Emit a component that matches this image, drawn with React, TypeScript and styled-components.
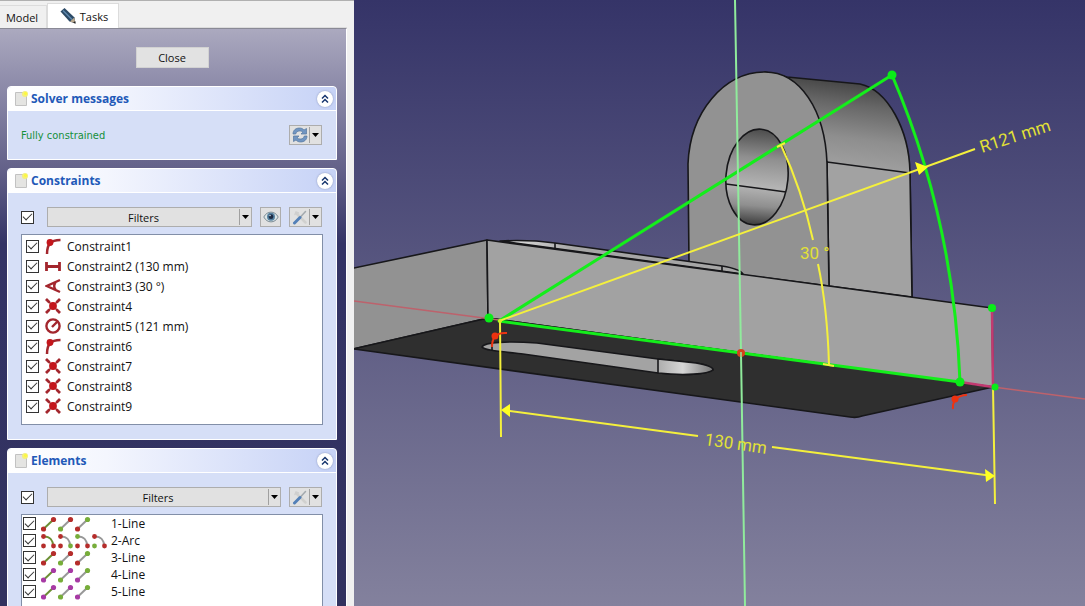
import React from 'react';
import styled, { createGlobalStyle } from 'styled-components';

const GlobalStyle = createGlobalStyle`
  *, *::before, *::after { box-sizing: border-box; }
  body {
    margin: 0;
    overflow: hidden;
    color: #111;
    font-family: 'Open Sans', 'Noto Sans', sans-serif;
    font-size: 11px;
  }
`;

const Shell = styled.main`
  display: grid;
  grid-template-columns: 354px minmax(0, 1fr);
  height: 100vh;
`;

const Sidebar = styled.aside`
  display: flex;
  flex-direction: column;
  min-height: 0;
  overflow: hidden;
  padding-right: 7px;
  border-top: 1px solid #b0b0b0;
  background: #f0f0f0;
`;

const Tabs = styled.div`
  display: flex;
  align-items: flex-end;
  height: 27px;
  flex: none;
  border-bottom: 1px solid #dcdcdc;
`;

const Tab = styled.button<{ $active?: boolean }>`
  display: flex;
  align-items: center;
  justify-content: center;
  gap: 4px;
  width: ${(p) => (p.$active ? 72 : 47)}px;
  height: ${(p) => (p.$active ? 25 : 23)}px;
  margin-bottom: -1px;
  padding: ${(p) => (p.$active ? '0 2px 0 4px' : '0 6px 0 4px')};
  border: 1px solid #dcdcdc;
  border-bottom: 0;
  border-left-width: ${(p) => (p.$active ? 1 : 0)}px;
  background: ${(p) => (p.$active ? '#fff' : '#f0f0f0')};
  color: inherit;
  font-family: inherit;
  font-size: 11px;
`;

const TaskArea = styled.div`
  display: flex;
  flex-direction: column;
  flex: 1;
  min-height: 0;
  gap: 8px;
  padding: 18px 9px 0 7px;
  overflow: hidden;
  border-top: 1px solid #8a8a96;
  border-right: 1px solid #fff;
  background: linear-gradient(#aba9bf 0, #8b89a8 60px, #636189 140px, #333365 215px, #32325f 100%);
`;

const CloseButton = styled.button`
  align-self: center;
  flex: none;
  width: 73px;
  height: 21px;
  margin-bottom: 10px;
  padding: 0;
  border: 1px solid #d2d2d2;
  background: #e2e2e2;
  color: inherit;
  font-family: inherit;
  font-size: 11px;
`;

const PanelBox = styled.section`
  flex: none;
  border: 1px solid #fff;
  border-radius: 4px 4px 0 0;
  background: #d6dff7;
`;

const PanelHeader = styled.header`
  display: flex;
  align-items: center;
  gap: 3px;
  height: 24px;
  padding: 0 3px 0 6px;
  border-bottom: 1px solid #fff;
  border-radius: 4px 4px 0 0;
  background: linear-gradient(90deg, #fff 0%, #f4f6fe 30%, #c6d2f6 100%);
`;

const PanelTitle = styled.h2`
  flex: 1;
  margin: 0;
  color: #2259b8;
  font-size: 12px;
  font-weight: bold;
`;

const CollapseButton = styled.button`
  display: flex;
  width: 16px;
  height: 16px;
  padding: 0;
  border: 0;
  border-radius: 8px;
  background: #fff;
  box-shadow: 0 0 2px #8290b8;
`;

const PanelBody = styled.div`
  padding: 14px 13px;
`;

const Toolbar = styled.div`
  display: flex;
  align-items: center;
  gap: 8px;
  height: 20px;
  padding-right: 1px;
`;

const Status = styled.p`
  flex: 1;
  margin: 0;
  color: #15903a;
  font-family: 'DejaVu Sans Condensed', 'Noto Sans', sans-serif;
`;

const CheckBox = styled.input`
  appearance: none;
  display: grid;
  place-items: center;
  flex: none;
  width: 13px;
  height: 13px;
  margin: 0;
  border: 1px solid #333;
  background: #fff;
  &:checked::after {
    content: '';
    width: 9px;
    height: 5px;
    margin-bottom: 3px;
    border: solid #333;
    border-width: 0 0 1px 1px;
    transform: rotate(-45deg);
  }
`;

const ToggleAll = styled(CheckBox)`
  margin-right: 5px;
`;

const SplitControl = styled.div<{ $wide?: boolean }>`
  display: flex;
  flex: ${(p) => (p.$wide ? 1 : 'none')};
  width: ${(p) => (p.$wide ? 'auto' : '33px')};
  height: 20px;
  border: 1px solid #adadad;
  background: #e1e1e1;
`;

const SplitMain = styled.button`
  display: flex;
  flex: 1;
  align-items: center;
  justify-content: center;
  padding: 0;
  border: 0;
  background: none;
  color: inherit;
  font-family: inherit;
  font-size: 11px;
`;

const SplitArrow = styled.button`
  display: flex;
  align-items: center;
  justify-content: center;
  width: 12px;
  margin: 1px 0;
  padding: 0;
  border: 0;
  border-left: 1px solid #a0a0a0;
  background: none;
`;

const IconButton = styled.button`
  display: flex;
  align-items: center;
  justify-content: center;
  width: 21px;
  height: 20px;
  padding: 0;
  border: 1px solid #adadad;
  background: #e1e1e1;
`;

const List = styled.ul<{ $size: 'fixed' | 'tall' }>`
  height: ${(p) => (p.$size === 'tall' ? 240 : 191)}px;
  margin: 7px 0 0;
  padding: ${(p) => (p.$size === 'tall' ? '0 1px' : '1px 4px')};
  border: 1px solid #828fa8;
  background: #fff;
  list-style: none;
`;

const Row = styled.label<{ $compact?: boolean }>`
  display: flex;
  align-items: center;
  gap: ${(p) => (p.$compact ? 5 : 6)}px;
  height: ${(p) => (p.$compact ? 17 : 20)}px;
  font-size: 12px;
  white-space: nowrap;
`;

const IconStrip = styled.span`
  display: flex;
  gap: 1px;
  width: 65px;
  svg { flex: none; }
`;

const Viewport = styled.section`
  min-width: 0;
  min-height: 0;
  overflow: hidden;
  background: linear-gradient(#353468, #83819d);
`;

const Scene = styled.svg`
  display: block;
  width: 100%;
  height: 100%;
  text {
    font-family: 'Roboto', sans-serif;
    font-size: 17px;
    fill: #e2e136;
  }
`;

const PencilIcon = () => (
  <svg width="16" height="16" viewBox="0 0 16 16">
    <path d="M.5 3.500 4.500 0 14.500 9.500 15.500 15.500 9.500 13.500Z" fill="#2c4a66" />
    <path d="m3 2.500 9 9" stroke="#5f88ad" strokeWidth="1.500" />
    <path d="m10 13.500 4.300-4 1.200 6Z" fill="#b9a88d" />
    <path d="m13 14.700 2.200-1.700.3 2.500Z" fill="#222" />
  </svg>
);

const NoteIcon = () => (
  <svg width="14" height="16" viewBox="0 0 14 16">
    <path d="M1.500 1.500h11v13h-11z" fill="#e4e4e2" stroke="#c2c2c2" />
    <circle cx="11" cy="3" r="3" fill="#f5f07a" />
    <circle cx="11.500" cy="2.500" r="1.500" fill="#fdf93c" />
  </svg>
);

const ChevronsIcon = () => (
  <svg width="16" height="16" viewBox="0 0 16 16" fill="none" stroke="#17356f" strokeWidth="1.500">
    <path d="m5 7.500 3-3 3 3M5 11.500l3-3 3 3" />
  </svg>
);

const ArrowDown = () => (
  <svg width="7" height="4" viewBox="0 0 7 4">
    <path d="M0 0h7L3.500 4Z" fill="#000" />
  </svg>
);

const RefreshIcon = () => (
  <svg width="16" height="16" viewBox="0 0 16 16">
    <path d="M1 7C1 3 4 1 7.500 1c2 0 3.500.8 4.500 2l2.500-1.500V7H9l1.800-1.800C10 4.300 9 4 7.700 4 5.500 4 4.300 5 3.700 7Z" fill="#7095c2" stroke="#54779f" strokeWidth=".7" />
    <path d="M15 9c0 4-3 6-6.500 6-2 0-3.500-.8-4.500-2l-2.500 1.500V9H7l-1.800 1.800c.8.900 1.800 1.200 3.100 1.200 2.200 0 3.400-1 4-3Z" fill="#7095c2" stroke="#54779f" strokeWidth=".7" />
  </svg>
);

const EyeIcon = () => (
  <svg width="16" height="14" viewBox="0 0 16 14">
    <path d="M.8 7C4 .500 12 .500 15.200 7 12 13.500 4 13.500 .8 7Z" fill="#dde5e6" stroke="#7c8d96" />
    <circle cx="8" cy="6.700" r="4" fill="#5581a0" />
    <circle cx="8" cy="6.700" r="2.400" fill="#1d2c45" />
    <circle cx="7" cy="5.500" r=".8" fill="#c9dceb" />
  </svg>
);

const ToolsIcon = () => (
  <svg width="16" height="16" viewBox="0 0 16 16" fill="none" strokeLinecap="round">
    <path d="m5 5 8.500 8.500" stroke="#d0d0ce" strokeWidth="2.500" />
    <path d="M3 5.500 4 3l2.500 1" stroke="#cfcfcf" strokeWidth="1.500" />
    <path d="m7.500 9 6-6.500" stroke="#a3a9ae" strokeWidth="1.500" />
    <path d="m2.500 14 5.500-5.500" stroke="#5380b8" strokeWidth="3" />
  </svg>
);

type ConstraintKind = 'tangent' | 'distance' | 'angle' | 'coincident' | 'radius';

const ConstraintIcon = ({ kind }: { kind: ConstraintKind }) => (
  <svg width="16" height="16" viewBox="0 0 16 16" fill="none" stroke="#a3262d" strokeWidth="2">
    {kind === 'tangent' && (
      <>
        <path d="M2 16C2 7 5 2 15.500 2" strokeWidth="2.500" />
        <circle cx="5" cy="4.500" r="3.400" fill="#c4161c" stroke="none" />
      </>
    )}
    {kind === 'distance' && <path d="M1.500 4v9M14.500 4v9M2 8.500h12" strokeWidth="2.800" />}
    {kind === 'angle' && <path d="M15 2 2 8 15 14M10.500 4.500c-1.500 2-1.500 5 0 7" strokeWidth="2.400" />}
    {kind === 'coincident' && (
      <>
        <path d="m1 1 14 14M15 1 1 15" strokeWidth="2.800" />
        <circle cx="8" cy="8" r="5.200" fill="#fff" stroke="none" />
        <circle cx="8" cy="8" r="3.900" fill="#c4161c" stroke="none" />
        <path d="m5.500 5.500-2-2M10.500 5.500l2-2M5.500 10.500l-2 2M10.500 10.500l2 2" strokeWidth="1.500" />
      </>
    )}
    {kind === 'radius' && (
      <>
        <circle cx="8" cy="8" r="6.600" strokeWidth="2.400" />
        <path d="m7 9 5-5" strokeWidth="2.400" />
      </>
    )}
  </svg>
);

const R = '#b52d2b';
const G = '#77ad3a';
const P = '#a73aa4';
const GREY = '#989898';

type Glyph = { line: string; dots: string[] };

const ElementIcon = ({ line, dots }: Glyph) => (
  <svg width="16" height="16" viewBox="0 0 16 16" fill="none">
    {dots.length === 2 ? (
      <>
        <path d="M2.500 13 12.500 3.500" stroke={line} strokeWidth="2" />
        <circle cx="2.500" cy="13" r="2.600" fill={dots[0]} />
        <circle cx="12.500" cy="3.500" r="2.600" fill={dots[1]} />
      </>
    ) : (
      <>
        <path d="M3 3.500c6 0 9 4 9 9" stroke={line} strokeWidth="2" />
        <circle cx="2.500" cy="3.500" r="2.400" fill={dots[0]} />
        <circle cx="2.500" cy="13" r="2.400" fill={dots[1]} />
        <circle cx="12.500" cy="13" r="2.400" fill={dots[2]} />
      </>
    )}
  </svg>
);

const constraints: { label: string; kind: ConstraintKind }[] = [
  { label: 'Constraint1', kind: 'tangent' },
  { label: 'Constraint2 (130 mm)', kind: 'distance' },
  { label: 'Constraint3 (30 °)', kind: 'angle' },
  { label: 'Constraint4', kind: 'coincident' },
  { label: 'Constraint5 (121 mm)', kind: 'radius' },
  { label: 'Constraint6', kind: 'tangent' },
  { label: 'Constraint7', kind: 'coincident' },
  { label: 'Constraint8', kind: 'coincident' },
  { label: 'Constraint9', kind: 'coincident' },
];

const lineGlyphs = (c: string): Glyph[] => [
  { line: '#6c8f34', dots: [c, c] },
  { line: GREY, dots: [G, c] },
  { line: GREY, dots: [c, G] },
];

const arcGlyphs: Glyph[] = [
  { line: '#6c8f34', dots: [R, R, R] },
  { line: GREY, dots: [R, R, G] },
  { line: GREY, dots: [G, R, R] },
  { line: GREY, dots: [R, G, R] },
];

const elements: { label: string; glyphs: Glyph[] }[] = [
  { label: '1-Line', glyphs: lineGlyphs(R) },
  { label: '2-Arc', glyphs: arcGlyphs },
  { label: '3-Line', glyphs: lineGlyphs(R) },
  { label: '4-Line', glyphs: lineGlyphs(P) },
  { label: '5-Line', glyphs: lineGlyphs(P) },
];

const Panel = ({ title, children }: { title: string; children: React.ReactNode }) => (
  <PanelBox>
    <PanelHeader>
      <NoteIcon />
      <PanelTitle>{title}</PanelTitle>
      <CollapseButton aria-label={`Collapse ${title}`}>
        <ChevronsIcon />
      </CollapseButton>
    </PanelHeader>
    <PanelBody>{children}</PanelBody>
  </PanelBox>
);

const SplitButton = ({ wide, name, children }: { wide?: boolean; name: string; children: React.ReactNode }) => (
  <SplitControl $wide={wide}>
    <SplitMain aria-label={name}>{children}</SplitMain>
    <SplitArrow aria-label={`${name} menu`}>
      <ArrowDown />
    </SplitArrow>
  </SplitControl>
);

const ModelScene = () => (
  <Scene viewBox="354 0 731 606" preserveAspectRatio="xMinYMin slice" role="img" aria-label="Sketch on model">
    <defs>
      <linearGradient id="hole" x1="0" y1="0" x2="0" y2="1">
        <stop offset="0" stopColor="#4c4c4c" />
        <stop offset=".3" stopColor="#8f8f8f" />
        <stop offset=".6" stopColor="#b4b4b4" />
        <stop offset=".8" stopColor="#8f8f8f" />
        <stop offset="1" stopColor="#3c3c3c" />
      </linearGradient>
      <linearGradient id="barrel" gradientUnits="userSpaceOnUse" x1="850" y1="76" x2="838" y2="170">
        <stop offset="0" stopColor="#3d3d3d" />
        <stop offset=".3" stopColor="#676767" />
        <stop offset=".65" stopColor="#8e8e8e" />
        <stop offset="1" stopColor="#a2a2a2" />
      </linearGradient>
      <linearGradient id="slotEnd">
        <stop offset="0" stopColor="#adadad" />
        <stop offset=".45" stopColor="#d6d6d6" />
        <stop offset="1" stopColor="#777" />
      </linearGradient>
      <linearGradient id="slotTop">
        <stop offset="0" stopColor="#e8e8e8" />
        <stop offset=".3" stopColor="#a6a6a6" />
      </linearGradient>
    </defs>

    <g stroke="#17171a" strokeWidth="1.600" strokeLinejoin="round">
      <path d="M765 72 L787 77 860 84C888 90 909 130 910 172L912 297 829 286 827 162Z" fill="url(#barrel)" />
      <path d="M827 162 910 173 912 297 829 286Z" fill="#a2a2a2" />
      <path d="M689 262 688 164C690 112 724 72 765 72 800 72 825 110 827 163L829 286 743 275Z" fill="#929292" />
      <ellipse cx="757" cy="177" rx="31" ry="48" transform="rotate(5 757 177)" fill="url(#hole)" />
      <path d="M726 184 786 192" />
      <path d="M500 241C520 240 540 241 555 243L722 266C734 268 741 270 743 274Z" fill="url(#slotTop)" />
      <path d="M555 243v6M722 266v6" />
      <path d="M340 271 487 240 488 318 340 352Z" fill="#929292" />
      <path d="M487 240 992 308 993 387 488 318Z" fill="#a2a2a2" />
      <path d="M340 352 488 318 993 387 862 416Q857 418 850 417L354 349Z" fill="#2f2f2f" />
      <path d="M482 347C484 342 508 341 537 343L658 359 696 363C708 365 713 367 713 370 708 374 685 376 658 373L523 354C495 351 484 350 482 347Z" fill="#a3a3a3" />
      <path d="M658 359 696 363C708 365 713 367 713 370 708 374 685 376 658 373Z" fill="url(#slotEnd)" />
      <path d="M492 343v7" />
    </g>

    <g fill="none">
      <path d="M354 301 499 320M993 387 1085 399" stroke="#bd626c" strokeWidth="1.500" />
      <path d="M992 309 993 387 960 382" stroke="#c13a70" strokeWidth="2.500" />
      <path d="M892 75 499 321 960 382Q954 220 892 75" stroke="#14ee1b" strokeWidth="3" strokeLinejoin="round" />
      <path d="M735 0 741 353 745 606" stroke="#90eb9c" strokeWidth="2" />
      <path d="M499 321 975 149" stroke="#f4f03c" strokeWidth="2" />
      <path d="M777 147 785 143M781 145C794 173 806 208 813 240M818 264C824 292 828 330 829 365M823 364 834 366" stroke="#f4f03c" strokeWidth="2" />
      <path d="M500 321 501 437M993 387 995 504M503 410 698 436M772 447 993 476" stroke="#f4f03c" strokeWidth="2" />
    </g>

    <g fill="#ffff22">
      <path d="M501 410 510 404V417Z" />
      <path d="M995 476 985 469 986 482Z" />
      <path d="M928 167 915 162 919 175Z" />
    </g>

    <g fill="#09ed18">
      <circle cx="892" cy="75" r="4.500" />
      <circle cx="489" cy="318" r="4.500" />
      <circle cx="960" cy="382" r="4.500" />
      <circle cx="992" cy="308" r="4" />
      <circle cx="995" cy="387" r="3.500" />
    </g>
    <circle cx="500" cy="321" r="2" fill="#d8ee24" />
    <circle cx="741" cy="353" r="4" fill="#d6421c" />
    <path d="M741 352 741 358" stroke="#90eb9c" strokeWidth="1.500" />
    <g fill="none" stroke="#ec3413" strokeWidth="2">
      <path d="M492 347C492 339 495 332 507 333" />
      <path d="M953 409C952 402 957 395 967 395" />
    </g>
    <g fill="#ee3210">
      <circle cx="495" cy="336" r="3.500" />
      <circle cx="955" cy="399" r="3.500" />
    </g>
    <text transform="translate(982 153) rotate(-18)">R121 mm</text>
    <text x="800" y="259">30 °</text>
    <text transform="translate(704 445) rotate(8)">130 mm</text>
  </Scene>
);

export default function App() {
  return (
    <>
      <GlobalStyle />
      <Shell>
        <Sidebar>
          <Tabs role="tablist">
            <Tab role="tab" aria-selected={false}>Model</Tab>
            <Tab role="tab" aria-selected $active>
              <PencilIcon />
              Tasks
            </Tab>
          </Tabs>
          <TaskArea>
            <CloseButton>Close</CloseButton>
            <Panel title="Solver messages">
              <Toolbar>
                <Status>Fully constrained</Status>
                <SplitButton name="Update">
                  <RefreshIcon />
                </SplitButton>
              </Toolbar>
            </Panel>
            <Panel title="Constraints">
              <Toolbar>
                <ToggleAll type="checkbox" defaultChecked aria-label="Toggle all constraints" />
                <SplitButton wide name="Filters">Filters</SplitButton>
                <IconButton aria-label="Show constraints">
                  <EyeIcon />
                </IconButton>
                <SplitButton name="Constraint settings">
                  <ToolsIcon />
                </SplitButton>
              </Toolbar>
              <List $size="fixed">
                {constraints.map(({ label, kind }) => (
                  <li key={label}>
                    <Row>
                      <CheckBox type="checkbox" defaultChecked />
                      <ConstraintIcon kind={kind} />
                      {label}
                    </Row>
                  </li>
                ))}
              </List>
            </Panel>
            <Panel title="Elements">
              <Toolbar>
                <ToggleAll type="checkbox" defaultChecked aria-label="Toggle all elements" />
                <SplitButton wide name="Filters">Filters</SplitButton>
                <SplitButton name="Element settings">
                  <ToolsIcon />
                </SplitButton>
              </Toolbar>
              <List $size="tall">
                {elements.map(({ label, glyphs }) => (
                  <li key={label}>
                    <Row $compact>
                      <CheckBox type="checkbox" defaultChecked />
                      <IconStrip>
                        {glyphs.map((g, i) => (
                          <ElementIcon key={i} {...g} />
                        ))}
                      </IconStrip>
                      {label}
                    </Row>
                  </li>
                ))}
              </List>
            </Panel>
          </TaskArea>
        </Sidebar>
        <Viewport>
          <ModelScene />
        </Viewport>
      </Shell>
    </>
  );
}
